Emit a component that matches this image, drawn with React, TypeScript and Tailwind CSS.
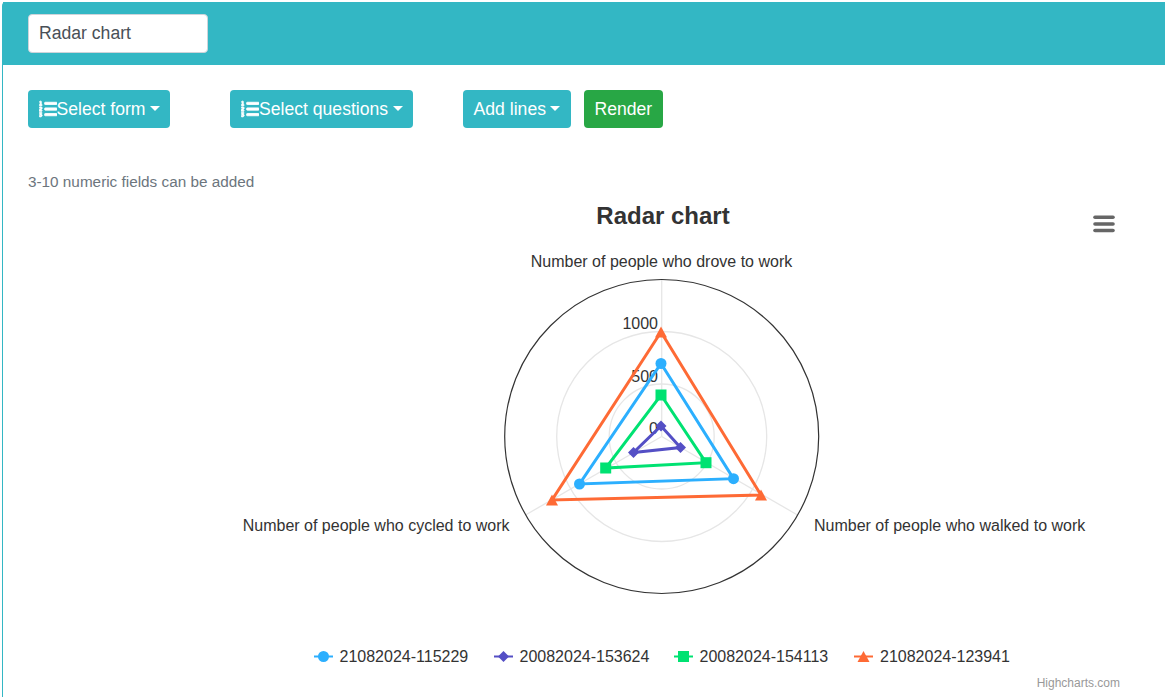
import { FaListOl } from "react-icons/fa";

const cx = 661.7;
const cy = 436.5;

type Pt = [number, number];
const pts = (p: Pt[]) => p.map((q) => q.join(",")).join(" ");

const blue: Pt[] = [[661, 363.5], [733.5, 478.7], [579.5, 484]];
const purple: Pt[] = [[661, 426], [680.5, 447.5], [633.5, 452.5]];
const green: Pt[] = [[661, 395], [706, 462.7], [605.7, 468]];
const orange: Pt[] = [[661, 332], [761, 495], [552, 500]];

const marker = {
  circle: (x: number, y: number, c: string) => <circle key={x} cx={x} cy={y} r={5.5} fill={c} />,
  diamond: (x: number, y: number, c: string) => (
    <polygon key={x} points={`${x},${y - 5.5} ${x + 5.5},${y} ${x},${y + 5.5} ${x - 5.5},${y}`} fill={c} />
  ),
  square: (x: number, y: number, c: string) => <rect key={x} x={x - 5.5} y={y - 5.5} width={11} height={11} fill={c} />,
  triangle: (x: number, y: number, c: string) => (
    <polygon key={x} points={`${x},${y - 5.5} ${x + 6},${y + 5.5} ${x - 6},${y + 5.5}`} fill={c} />
  ),
};

const series = [
  { name: "21082024-115229", color: "#2caffe", data: blue, m: marker.circle, lx: 314, tx: 339.5 },
  { name: "20082024-153624", color: "#544fc5", data: purple, m: marker.diamond, lx: 494, tx: 519.5 },
  { name: "20082024-154113", color: "#00e272", data: green, m: marker.square, lx: 674, tx: 699.5 },
  { name: "21082024-123941", color: "#fe6a35", data: orange, m: marker.triangle, lx: 854, tx: 880 },
];

function Btn({ icon, label, caret, green: g }: { icon?: boolean; label: string; caret?: boolean; green?: boolean }) {
  return (
    <button
      className={`flex h-[38px] items-center rounded-[4px] px-[10.5px] text-[17.6px] text-white ${g ? "bg-[#28a745]" : "bg-[#33b7c4]"}`}
    >
      {icon && <FaListOl className="h-[18px] w-[18px]" stroke="currentColor" strokeWidth={24} />}
      <span>{label}</span>
      {caret && (
        <span className="ml-[4.5px] mt-[-2px] h-0 w-0 border-x-[5.28px] border-t-[5.28px] border-x-transparent border-t-white" />
      )}
    </button>
  );
}

export default function App() {
  return (
    <div className="h-[697px] w-[1165px] overflow-hidden bg-white pl-[2px] pt-[2px] font-['Liberation_Sans',Arial,sans-serif]">
      <div className="h-[800px] w-[1200px] rounded-tl-[4px] border-l border-[#33b7c4]">
        <div className="flex h-[63px] items-center bg-[#33b7c4] pl-[25px]">
          <div className="flex h-[39px] w-[180px] items-center rounded-[4px] border border-[#ced4da] bg-white px-[10px] text-[17.6px] text-[#495057]">
            Radar chart
          </div>
        </div>
        <div className="px-[25px]">
          <div className="mt-[25px] flex items-center">
            <Btn icon label="Select form" caret />
            <div className="ml-[60px]">
              <Btn icon label="Select questions" caret />
            </div>
            <div className="ml-[50px]">
              <Btn label="Add lines" caret />
            </div>
            <div className="ml-[13px]">
              <Btn label="Render" green />
            </div>
          </div>
          <p className="mt-[45px] text-[15.3px] leading-[18px] text-[#6c757d]">3-10 numeric fields can be added</p>
          <svg
            viewBox="28 191 1110 506"
            width={1110}
            height={506}
            className="block"
            fontFamily="'Liberation Sans', Arial, sans-serif"
          >
            <text x={663} y={224} textAnchor="middle" fontSize={24} fontWeight="bold" fill="#333333">
              Radar chart
            </text>
            <g stroke="#666666" strokeWidth={3.6} strokeLinecap="round">
              <line x1={1095} x2={1113} y1={217.3} y2={217.3} />
              <line x1={1095} x2={1113} y1={224} y2={224} />
              <line x1={1095} x2={1113} y1={230.5} y2={230.5} />
            </g>

            <g fill="none" stroke="#e6e6e6" strokeWidth={1.3}>
              <circle cx={cx} cy={cy} r={52.5} />
              <circle cx={cx} cy={cy} r={105} />
              <line x1={cx} y1={cy} x2={cx} y2={279.5} />
              <line x1={cx} y1={cy} x2={797.5} y2={515} />
              <line x1={cx} y1={cy} x2={525.5} y2={515} />
            </g>
            <circle cx={cx} cy={cy} r={157} fill="none" stroke="#333333" strokeWidth={1.2} />

            <g fontSize={16} fill="#333333">
              <text x={661.5} y={267} textAnchor="middle">Number of people who drove to work</text>
              <text x={814} y={531}>Number of people who walked to work</text>
              <text x={509.5} y={531} textAnchor="end">Number of people who cycled to work</text>
              <text x={658} y={329} textAnchor="end">1000</text>
              <text x={658} y={382} textAnchor="end">500</text>
              <text x={658} y={434} textAnchor="end">0</text>
            </g>

            {series.map((s) => (
              <g key={s.name}>
                <polygon points={pts(s.data)} fill="none" stroke={s.color} strokeWidth={3} />
                {s.data.map(([x, y]) => s.m(x, y, s.color))}
              </g>
            ))}

            {series.map((s) => (
              <g key={s.name}>
                <line x1={s.lx} x2={s.lx + 19} y1={656.5} y2={656.5} stroke={s.color} strokeWidth={2} />
                {s.m(s.lx + 9.5, 656.5, s.color)}
                <text x={s.tx} y={662} fontSize={16} fill="#333333">{s.name}</text>
              </g>
            ))}

            <text x={1120} y={687} textAnchor="end" fontSize={12} fill="#999999">Highcharts.com</text>
          </svg>
        </div>
      </div>
    </div>
  );
}
